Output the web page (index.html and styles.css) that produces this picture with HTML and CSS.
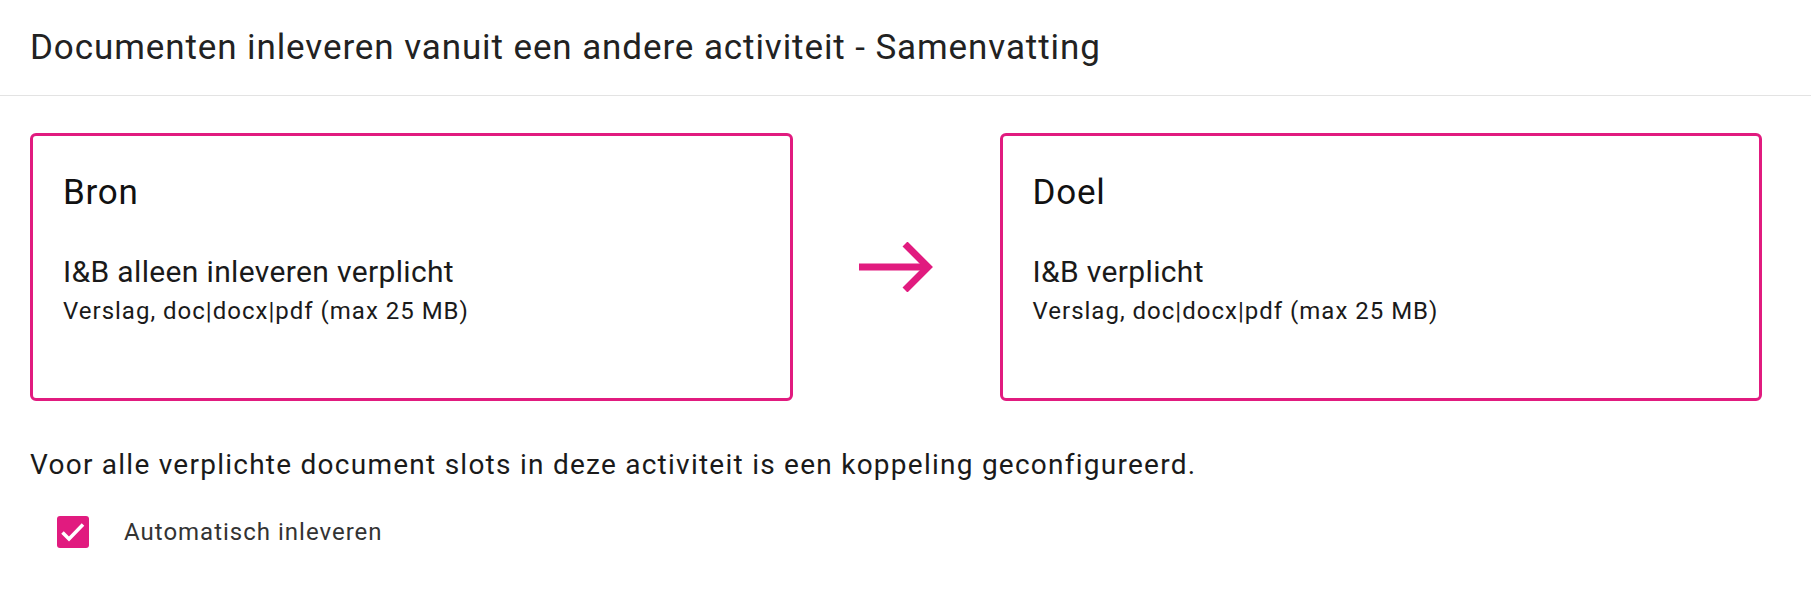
FILE: index.html
```html
<!DOCTYPE html>
<html lang="nl">
<head>
    <meta charset="UTF-8">
    <meta name="viewport" content="width=device-width, initial-scale=1.0">
    <title>Documenten inleveren - Samenvatting</title>
    <link rel="stylesheet" href="styles.css">
</head>
<body>
    <header class="page-header">
        <h1 class="page-title">Documenten inleveren vanuit een andere activiteit - Samenvatting</h1>
    </header>

    <main class="summary">
        <div class="mapping">
            <section class="slot-card">
                <h2 class="slot-heading">Bron</h2>
                <p class="slot-rule">I&amp;B alleen inleveren verplicht</p>
                <p class="slot-meta">Verslag, doc|docx|pdf (max 25 MB)</p>
            </section>

            <div class="mapping-arrow">
                <svg width="74" height="50" viewBox="0 0 74 50" aria-hidden="true">
                    <path d="M0 25H69" />
                    <path d="M46 2L69 25L46 48" />
                </svg>
            </div>

            <section class="slot-card">
                <h2 class="slot-heading">Doel</h2>
                <p class="slot-rule">I&amp;B verplicht</p>
                <p class="slot-meta">Verslag, doc|docx|pdf (max 25 MB)</p>
            </section>
        </div>

        <p class="summary-note">Voor alle verplichte document slots in deze activiteit is een koppeling geconfigureerd.</p>

        <label class="auto-submit">
            <input type="checkbox" id="auto-submit" checked>
            <span class="check-box">
                <svg width="32" height="32" viewBox="0 0 32 32" aria-hidden="true">
                    <path d="M5.5 16.5L12 23L26 8.5" />
                </svg>
            </span>
            <span class="check-label">Automatisch inleveren</span>
        </label>
    </main>
</body>
</html>
```

FILE: styles.css
```css
* {
    box-sizing: border-box;
    margin: 0;
    padding: 0;
    font-family: Roboto, "Noto Sans", sans-serif;
}

body {
    background-color: #fff;
    color: #1a1a1a;
}

.page-header {
    height: 96px;
    padding: 28px 30px 0;
    border-bottom: 1px solid #e3e3e3;
}

.page-title {
    font-size: 35px;
    line-height: 40px;
    font-weight: 400;
    color: #222;
    letter-spacing: 0.9px;
}

.summary {
    padding: 37px 49px 0 30px;
}

.mapping {
    display: flex;
    align-items: center;
}

.slot-card {
    flex: 1;
    height: 268px;
    padding: 37px 30px 0;
    border: 3px solid #e11b7f;
    border-radius: 6px;
}

.slot-heading {
    font-size: 35px;
    line-height: 40px;
    font-weight: 400;
    color: #111;
    letter-spacing: 0.75px;
}

.slot-rule {
    margin-top: 41px;
    font-size: 30px;
    line-height: 36px;
    letter-spacing: 0.35px;
    color: #1a1a1a;
}

.slot-meta {
    margin-top: 5px;
    font-size: 24px;
    line-height: 32px;
    letter-spacing: 1px;
    color: #1a1a1a;
}

.mapping-arrow {
    width: 207px;
    display: flex;
    justify-content: center;
}

.mapping-arrow path {
    fill: none;
    stroke: #e11b7f;
    stroke-width: 7;
}

.summary-note {
    margin-top: 47px;
    font-size: 28px;
    line-height: 34px;
    letter-spacing: 1.25px;
    color: #1a1a1a;
}

.auto-submit {
    display: flex;
    align-items: center;
    gap: 35px;
    margin-top: 34px;
    margin-left: 27px;
    cursor: pointer;
}

.auto-submit input {
    display: none;
}

.check-box {
    width: 32px;
    height: 32px;
    border-radius: 3px;
    background-color: #e11b7f;
    display: flex;
}

.check-box path {
    fill: none;
    stroke: #fff;
    stroke-width: 3.5;
}

.check-label {
    font-size: 24px;
    line-height: 32px;
    letter-spacing: 1px;
    color: #333;
}
```
